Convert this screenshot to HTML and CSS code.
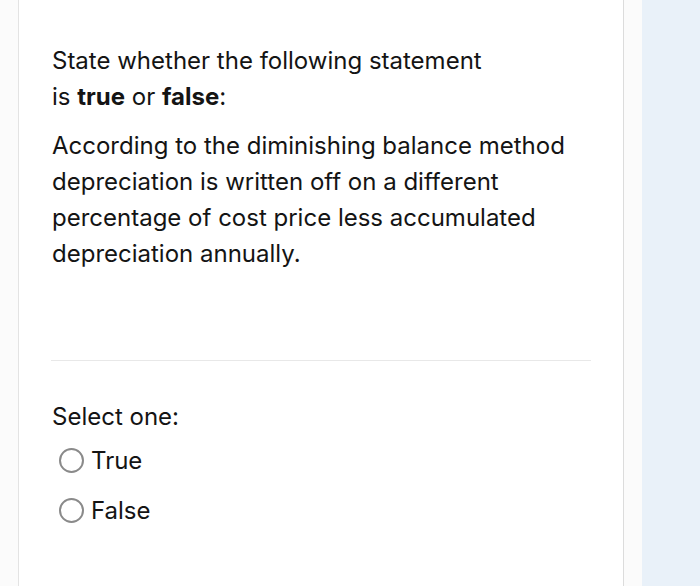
FILE: index.html
```html
<!DOCTYPE html>
<html>
<head>
<meta charset="utf-8">
<link rel="stylesheet" href="styles.css">
</head>
<body>
<div class="page">
  <div class="card">
    <div class="question">
      <p class="q-line">State whether the following statement<br>is <b>true</b> or <b>false</b>:</p>
      <p class="q-text">According to the diminishing balance method depreciation is written off on a different percentage of cost price less accumulated depreciation annually.</p>
    </div>
    <hr class="divider">
    <div class="answer">
      <div class="prompt">Select one:</div>
      <label class="option"><span class="radio"></span><span>True</span></label>
      <label class="option"><span class="radio"></span><span>False</span></label>
    </div>
  </div>
  <div class="side"></div>
</div>
</body>
</html>
```
FILE: styles.css
```css
html, body {
  margin: 0;
  padding: 0;
  background: #fbfbfb;
}
body {
  font-family: Inter, "Liberation Sans", sans-serif;
  color: #141414;
  width: 700px;
  height: 586px;
  overflow: hidden;
}
.page {
  display: flex;
  height: 586px;
  padding-left: 18px;
  gap: 18px;
}
.card {
  width: 539px;
  flex: none;
  background: #fff;
  border-left: 1px solid #e3e3e3;
  border-right: 1px solid #dcdcdc;
  padding: 43px 32px 0 33px;
}
.question p {
  margin: 0;
  font-size: 24px;
  line-height: 36px;
}
.question .q-text {
  margin-top: 13px;
}
.divider {
  border: 0;
  border-top: 1px solid #e8e8e8;
  margin: 88px 0 0 -1px;
  width: 540px;
}
.answer {
  padding-top: 38px;
}
.prompt {
  font-size: 24px;
  line-height: 36px;
}
.option {
  display: flex;
  align-items: center;
  gap: 7px;
  font-size: 24px;
  height: 50px;
  margin-left: 7px;
}
.radio {
  width: 21px;
  height: 21px;
  border: 2px solid #8a8a8a;
  border-radius: 50%;
}
.side {
  flex: 1;
  background: #e9f1f9;
}
```
